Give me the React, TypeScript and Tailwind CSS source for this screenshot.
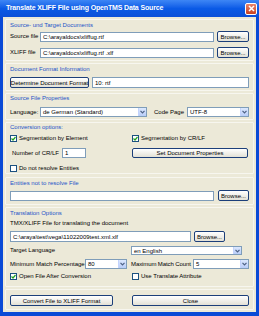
import React from "react";

const F = { fontFamily: '"Liberation Sans", Arial, sans-serif' };

function Panel({ h, mt, children }: { h: number; mt: number; children: React.ReactNode }) {
  return (
    <div
      className="mx-[2px] border border-[#f7f6ef] rounded-[1px] px-[4px] flex flex-col shrink-0"
      style={{ height: h, marginTop: mt }}
    >
      {children}
    </div>
  );
}

function GLabel({ children }: { children: React.ReactNode }) {
  return <div className="h-[8px] leading-[8px] text-[#2352c8] whitespace-nowrap">{children}</div>;
}

function Input({ w, value, h = 10 }: { w: number; value?: string; h?: number }) {
  return (
    <div
      className="bg-white border border-[#7f9db9] shrink-0 flex items-center px-[2px] leading-none whitespace-nowrap overflow-hidden"
      style={{ width: w, height: h }}
    >
      {value}
    </div>
  );
}

function Btn({ w, label, h = 11 }: { w: number; label: string; h?: number }) {
  return (
    <div
      className="shrink-0 flex items-center justify-center rounded-[2px] border border-[#1c3f7a] bg-gradient-to-b from-white to-[#e3e1d6] leading-none whitespace-nowrap"
      style={{ width: w, height: h }}
    >
      {label}
    </div>
  );
}

function Select({ w, value, h = 10 }: { w: number; value: string; h?: number }) {
  return (
    <div
      className="bg-white border border-[#7f9db9] shrink-0 flex items-center leading-none whitespace-nowrap overflow-hidden"
      style={{ width: w, height: h }}
    >
      <div className="flex-1 px-[2px]">{value}</div>
      <div className="w-[8px] h-full bg-gradient-to-b from-[#dce8fe] to-[#b9cdf8] border-l border-[#c3d3fd] flex items-center justify-center">
        <svg width="5" height="4" viewBox="0 0 5 4">
          <path d="M0.5 0.8 L2.5 2.8 L4.5 0.8" stroke="#4d6185" strokeWidth="1.2" fill="none" />
        </svg>
      </div>
    </div>
  );
}

function Check({ checked, label }: { checked: boolean; label: string }) {
  return (
    <div className="flex items-center gap-[2px] whitespace-nowrap leading-none">
      <div className="w-[7px] h-[7px] bg-white border border-[#1c5180] flex items-center justify-center shrink-0">
        {checked && (
          <svg width="5" height="5" viewBox="0 0 5 5">
            <path d="M0.5 2.5 L2 4 L4.5 1" stroke="#21a121" strokeWidth="1.2" fill="none" />
          </svg>
        )}
      </div>
      <span>{label}</span>
    </div>
  );
}

export default function App() {
  return (
    <div
      className="w-[259px] h-[316px] bg-[#0a4ad6] flex flex-col overflow-hidden text-[6px] text-black"
      style={F}
    >
      <div className="h-[17px] shrink-0 flex items-center pl-[6px] pr-[2px] bg-gradient-to-b from-[#3d86f5] via-[#0a5ae6] to-[#0b4fd8]">
        <span className="flex-1 text-white font-bold text-[7px] tracking-[-0.15px] whitespace-nowrap">
          Translate XLIFF File using OpenTMS Data Source
        </span>
        <div className="w-[12px] h-[12px] rounded-[2px] border border-white bg-gradient-to-b from-[#e8826a] to-[#c8401f] flex items-center justify-center">
          <svg width="7" height="7" viewBox="0 0 7 7">
            <path d="M1 1 L6 6 M6 1 L1 6" stroke="white" strokeWidth="1.5" />
          </svg>
        </div>
      </div>
      <div className="flex-1 mx-[3px] mb-[4px] bg-[#ece9d8] flex flex-col">
        <Panel h={42} mt={2}>
          <div className="mt-[1px]"><GLabel>Source- und Target Documents</GLabel></div>
          <div className="mt-[2px] flex items-center h-[11px]">
            <div className="w-[30px] whitespace-nowrap">Source file</div>
            <Input w={174} value="C:\arayaldocs\xliffug.rtf" />
            <div className="ml-[3px]"><Btn w={32} label="Browse..." /></div>
          </div>
          <div className="mt-[5px] flex items-center h-[11px]">
            <div className="w-[30px] whitespace-nowrap">XLIFF file</div>
            <Input w={174} value="C:\arayaldocs\xliffug.rtf .xlf" />
            <div className="ml-[3px]"><Btn w={32} label="Browse..." /></div>
          </div>
        </Panel>
        <Panel h={28} mt={2}>
          <div className="mt-[1px]"><GLabel>Document Format Information</GLabel></div>
          <div className="mt-[4px] flex items-center h-[11px]">
            <Btn w={79} label="Determine Document Format" />
            <div className="ml-[3px]"><Input w={157} h={11} value="10: rtf" /></div>
          </div>
        </Panel>
        <Panel h={27} mt={2}>
          <div className="mt-[0px]"><GLabel>Source File Properties</GLabel></div>
          <div className="mt-[5px] flex items-center h-[10px]">
            <div className="w-[30px] whitespace-nowrap">Language:</div>
            <Select w={107} value="de German (Standard)" />
            <div className="w-[40px] pl-[7px] whitespace-nowrap">Code Page</div>
            <Select w={62} value="UTF-8" />
          </div>
        </Panel>
        <Panel h={52} mt={2}>
          <div className="mt-[0px]"><GLabel>Conversion options:</GLabel></div>
          <div className="mt-[3px] flex items-center h-[8px]">
            <div className="w-[122px]"><Check checked label="Segmentation by Element" /></div>
            <Check checked label="Segmentation by CR/LF" />
          </div>
          <div className="mt-[6px] flex items-center h-[10px]">
            <div className="w-[52px] pl-[2px] whitespace-nowrap">Number of CR/LF</div>
            <Input w={24} value="1" />
            <div className="w-[46px]" />
            <Btn w={116} h={10} label="Set Document Properties" />
          </div>
          <div className="mt-[6px] flex items-center h-[8px]">
            <Check checked={false} label="Do not resolve Entities" />
          </div>
        </Panel>
        <Panel h={28} mt={3}>
          <div className="mt-[1px]"><GLabel>Entities not to resolve File</GLabel></div>
          <div className="mt-[3px] flex items-center h-[11px]">
            <Input w={204} />
            <div className="ml-[4px]"><Btn w={31} label="Browse..." /></div>
          </div>
        </Panel>
        <Panel h={80} mt={2}>
          <div className="mt-[1px]"><GLabel>Translation Options</GLabel></div>
          <div className="mt-[2px] h-[8px] leading-[8px] whitespace-nowrap">TMX/XLIFF File for translating the document</div>
          <div className="mt-[4px] flex items-center h-[11px]">
            <Input w={181} h={11} value="C:\araya\test\vega\11022009test.xml.xlf" />
            <div className="ml-[3px]"><Btn w={31} label="Browse..." /></div>
          </div>
          <div className="mt-[4px] flex items-center h-[9px]">
            <div className="w-[121px] whitespace-nowrap">Target Language</div>
            <Select w={111} h={9} value="en English" />
          </div>
          <div className="mt-[4px] flex items-center h-[10px]">
            <div className="w-[75px] whitespace-nowrap">Minimum Match Percentage</div>
            <Select w={42} value="80" />
            <div className="w-[66px] pl-[4px] whitespace-nowrap tracking-[-0.1px]">Maximum Match Count</div>
            <Select w={56} value="5" />
          </div>
          <div className="mt-[3px] flex items-center h-[8px]">
            <div className="w-[122px]"><Check checked label="Open File After Conversion" /></div>
            <Check checked={false} label="Use Translate Attribute" />
          </div>
        </Panel>
        <Panel h={21} mt={2}>
          <div className="mt-[5px] flex items-center h-[11px]">
            <Btn w={103} label="Convert File to XLIFF Format" />
            <div className="w-[19px]" />
            <Btn w={117} label="Close" />
          </div>
        </Panel>
      </div>
    </div>
  );
}
